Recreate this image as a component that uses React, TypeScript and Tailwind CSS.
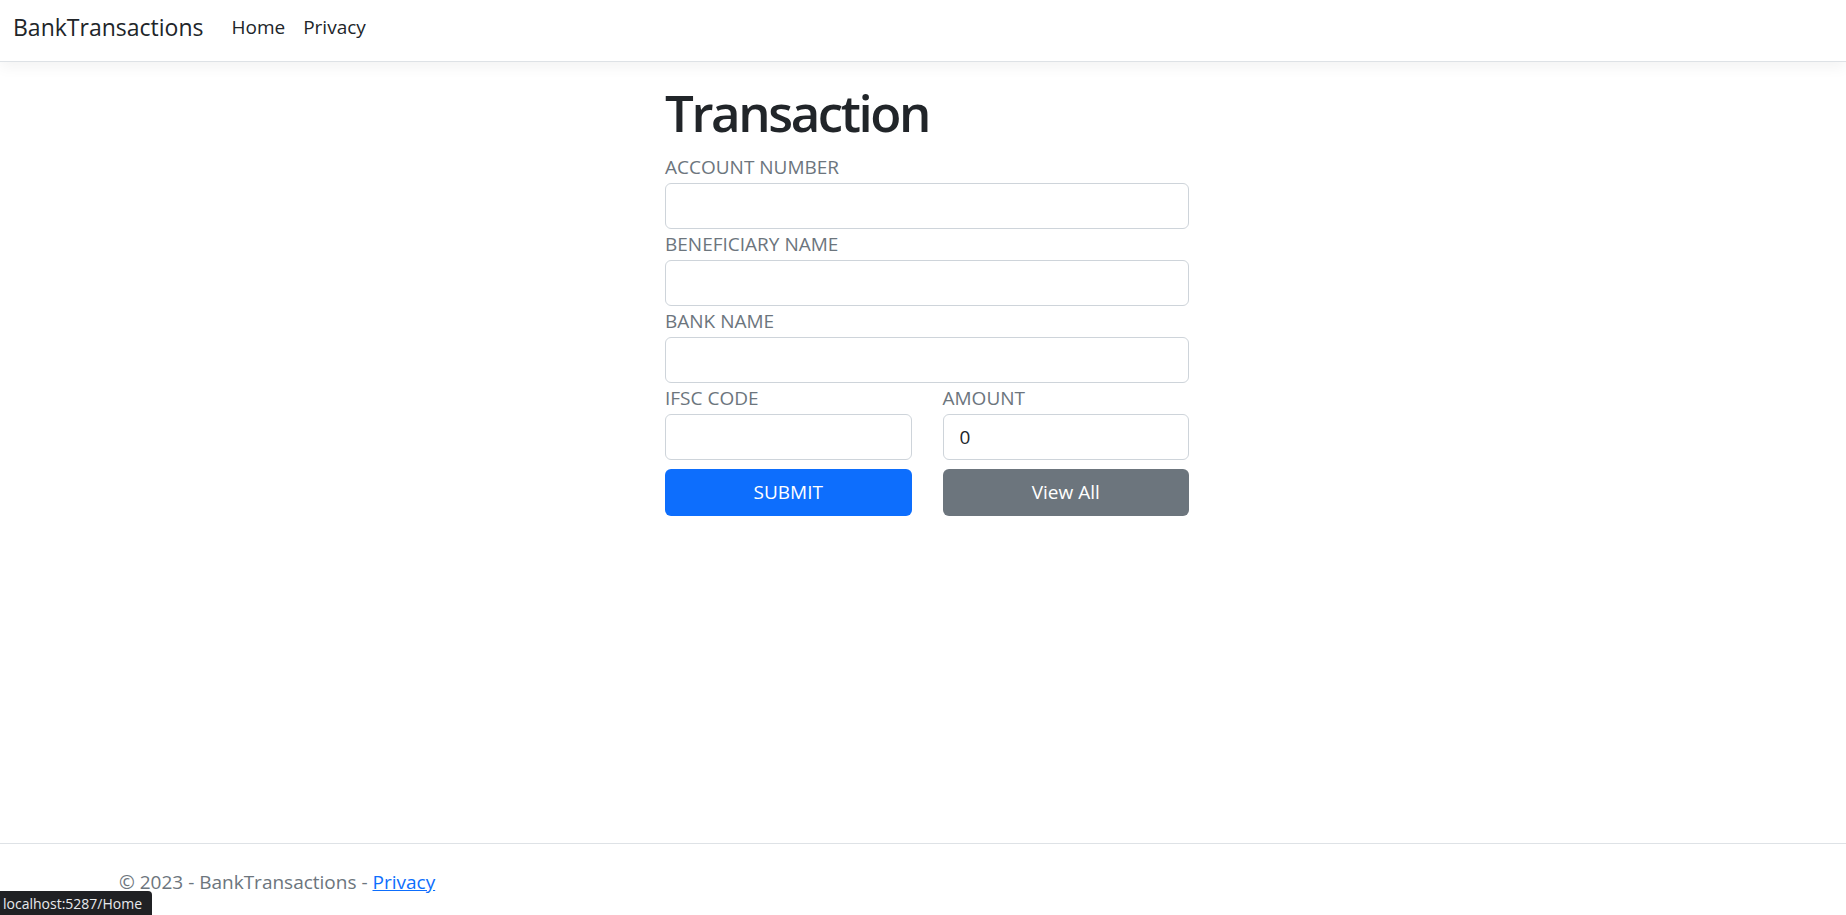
import { useState } from "react";

const Field = ({ label, value = "" }: { label: string; value?: string }) => {
  const [val, setVal] = useState(value);
  return (
    <div className="flex flex-col">
      <label className="text-[19px] leading-[31px] text-[#6c757d] uppercase">{label}</label>
      <input
        value={val}
        onChange={(e) => setVal(e.target.value)}
        className="h-[46px] w-full rounded-[6px] border border-[#ced4da] bg-white px-4 text-[19px] text-[#212529] outline-none"
      />
    </div>
  );
};

const App = () => {
  return (
    <div className="relative flex min-h-screen flex-col bg-white font-['Open_Sans',sans-serif] text-[#212529]">
      <nav className="flex h-[62px] items-center border-b border-[#dee2e6] bg-white px-[13px] pb-[6px] shadow-[0_5px_14px_rgba(0,0,0,0.05)]">
        <a href="#" className="mr-[28px] text-[23px] text-[#212529]">
          BankTransactions
        </a>
        <div className="flex gap-[18px] text-[19px]">
          <a href="#" className="text-[#212529]">Home</a>
          <a href="#" className="text-[#212529]">Privacy</a>
        </div>
      </nav>

      <main className="flex-1">
        <div className="ml-[665px] w-[524px] pt-[17px]">
          <h1 className="text-[51px] font-semibold leading-[66px] tracking-[-2.4px] text-[#212529]">Transaction</h1>
          <div className="mt-[7px] flex flex-col">
            <Field label="Account Number" />
            <Field label="Beneficiary Name" />
            <Field label="Bank Name" />
            <div className="grid grid-cols-2 gap-[31px]">
              <Field label="IFSC Code" />
              <Field label="Amount" value="0" />
            </div>
            <div className="mt-[9px] grid grid-cols-2 gap-[31px]">
              <button className="h-[47px] rounded-[6px] bg-[#0d6efd] text-[19px] text-white">SUBMIT</button>
              <button className="h-[47px] rounded-[6px] bg-[#6c757d] text-[19px] text-white">View All</button>
            </div>
          </div>
        </div>
      </main>

      <footer className="h-[72px] border-t border-[#dee2e6] pl-[119px] pt-[24px] text-[19px] text-[#6c757d]">
        © 2023 - BankTransactions - <a href="#" className="text-[#0d6efd] underline">Privacy</a>
      </footer>

      <div className="absolute bottom-0 left-0 flex h-[24px] w-[152px] items-center rounded-tr-[4px] bg-[#202124] pl-[3px] text-[14px] text-[#e8eaed]">
        localhost:5287/Home
      </div>
    </div>
  );
};

export default App;
